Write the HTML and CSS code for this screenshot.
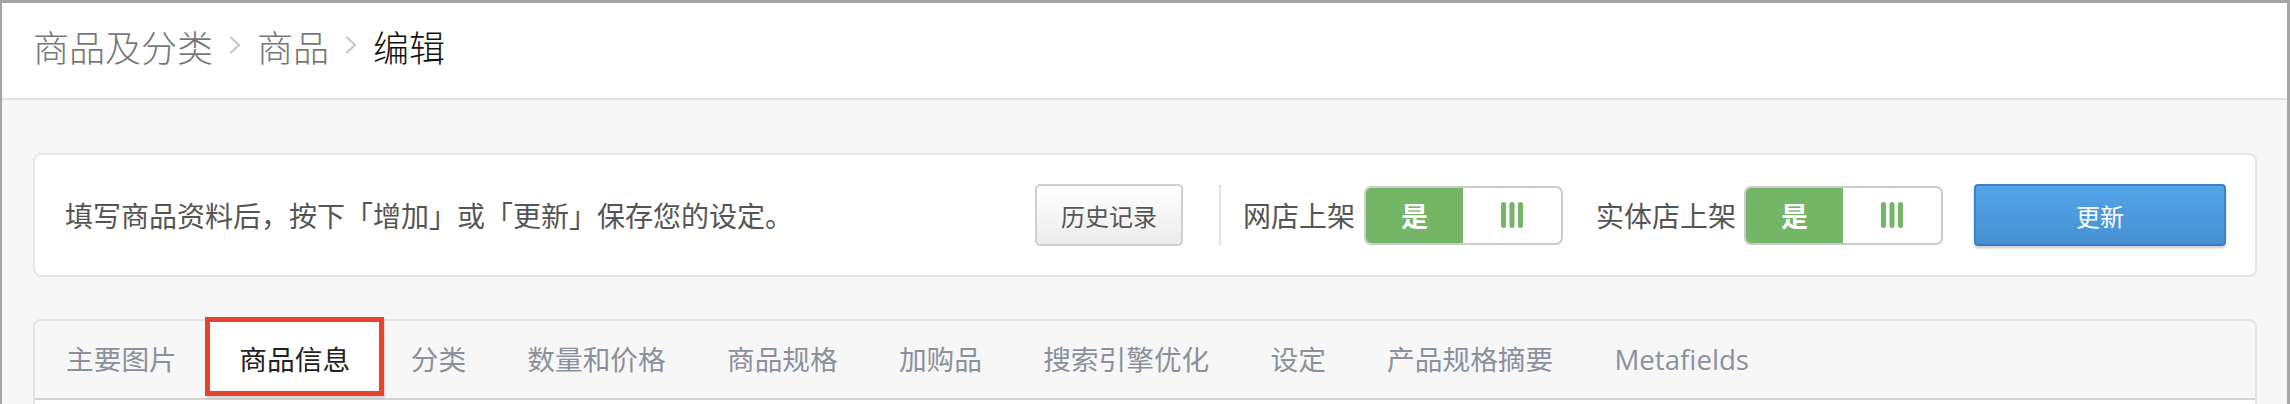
FILE: index.html
```html
<!DOCTYPE html>
<html lang="zh-CN">
<head>
<meta charset="utf-8">
<title>编辑商品</title>
<link rel="stylesheet" href="styles.css">
</head>
<body>
<div class="window">
  <header class="header">
    <nav class="crumbs">
      <span class="crumb">商品及分类</span>
      <svg class="chev" width="12" height="18" viewBox="0 0 12 18"><polyline points="2,1.5 10,9 2,16.5" fill="none" stroke="#c3c8d2" stroke-width="2.2" stroke-linecap="round" stroke-linejoin="round"/></svg>
      <span class="crumb">商品</span>
      <svg class="chev" width="12" height="18" viewBox="0 0 12 18"><polyline points="2,1.5 10,9 2,16.5" fill="none" stroke="#c3c8d2" stroke-width="2.2" stroke-linecap="round" stroke-linejoin="round"/></svg>
      <span class="crumb current">编辑</span>
    </nav>
  </header>

  <main class="main">
    <section class="card actions">
      <p class="hint">填写商品资料后，按下「增加」或「更新」保存您的设定。</p>
      <div class="controls">
        <button class="btn btn-default">历史记录</button>
        <span class="divider"></span>
        <span class="label label-web">网店上架</span>
        <div class="toggle">
          <span class="on">是</span>
          <span class="off"><svg width="22" height="26" viewBox="0 0 22 26"><rect x="0" y="0" width="5" height="26" rx="2.5" fill="#74b566"/><rect x="8.5" y="0" width="5" height="26" rx="2.5" fill="#74b566"/><rect x="17" y="0" width="5" height="26" rx="2.5" fill="#74b566"/></svg></span>
        </div>
        <span class="label label-store">实体店上架</span>
        <div class="toggle">
          <span class="on">是</span>
          <span class="off"><svg width="22" height="26" viewBox="0 0 22 26"><rect x="0" y="0" width="5" height="26" rx="2.5" fill="#74b566"/><rect x="8.5" y="0" width="5" height="26" rx="2.5" fill="#74b566"/><rect x="17" y="0" width="5" height="26" rx="2.5" fill="#74b566"/></svg></span>
        </div>
        <button class="btn btn-primary">更新</button>
      </div>
    </section>

    <section class="card tabs-card">
      <ul class="tabs">
        <li class="tab">主要图片</li>
        <li class="tab active">商品信息</li>
        <li class="tab">分类</li>
        <li class="tab">数量和价格</li>
        <li class="tab">商品规格</li>
        <li class="tab">加购品</li>
        <li class="tab">搜索引擎优化</li>
        <li class="tab">设定</li>
        <li class="tab">产品规格摘要</li>
        <li class="tab">Metafields</li>
      </ul>
      <div class="tab-body"></div>
    </section>
  </main>
</div>
</body>
</html>
```

FILE: styles.css
```css
* {
  box-sizing: border-box;
}

html, body {
  margin: 0;
  padding: 0;
}

body {
  background: #a5a5a5;
  font-family: "Open Sans", "Noto Sans CJK SC", sans-serif;
  overflow: hidden;
}

.window {
  margin: 3px 3px 0 2px;
  height: 401px;
  background: #f7f7f7;
  overflow: hidden;
}

/* ---------- header / breadcrumb ---------- */
.header {
  height: 97px;
  background: #ffffff;
  border-bottom: 2px solid #e3e3e3;
  display: flex;
  align-items: center;
  padding: 0 0 9px 31px;
}

.crumbs {
  display: flex;
  align-items: center;
  gap: 16px;
}

.crumb {
  font-family: "Noto Sans CJK SC", sans-serif;
  font-size: 36px;
  font-weight: 300;
  color: #777777;
  line-height: 1;
}

.crumb.current {
  color: #111111;
}

.chev {
  display: block;
  margin-top: -2px;
}

/* ---------- main ---------- */
.main {
  padding: 53px 30px 0 31px;
}

.card {
  background: #ffffff;
  border: 2px solid #e6e6e6;
  border-radius: 8px;
}

.actions {
  height: 124px;
  padding: 0 29px 0 30px;
  display: flex;
  align-items: center;
  justify-content: space-between;
}

.hint {
  margin: 0;
  font-size: 28px;
  color: #555555;
  white-space: nowrap;
}

.controls {
  display: flex;
  align-items: center;
}

.btn {
  font-family: "Open Sans", "Noto Sans CJK SC", sans-serif;
  font-size: 24px;
  height: 62px;
  border-radius: 5px;
  padding: 0;
  cursor: pointer;
}

.btn-default {
  width: 148px;
  color: #555555;
  border: 2px solid #cfcfcf;
  background: linear-gradient(#ffffff, #ececec);
  margin-right: 36px;
}

.divider {
  width: 2px;
  height: 60px;
  background: #e2e2e2;
  margin-right: 22px;
}

.label {
  font-size: 28px;
  color: #555555;
  white-space: nowrap;
}

.label-web {
  margin-right: 9px;
}

.label-store {
  margin-left: 33px;
  margin-right: 8px;
}

.toggle {
  width: 199px;
  height: 59px;
  border: 2px solid #cccccc;
  border-radius: 7px;
  overflow: hidden;
  display: flex;
  background: #ffffff;
}

.toggle .on {
  width: 97px;
  background: #74b566;
  color: #ffffff;
  font-size: 27px;
  font-weight: 700;
  display: flex;
  align-items: center;
  justify-content: center;
}

.toggle .off {
  flex: 1;
  display: flex;
  align-items: center;
  justify-content: center;
}

.toggle .off svg {
  display: block;
}

.btn-primary {
  width: 252px;
  margin-left: 31px;
  color: #ffffff;
  border: 2px solid #3b82c4;
  border-radius: 4px;
  background: linear-gradient(#53a4e9, #4590d1);
  box-shadow: 0 2px 3px rgba(0, 0, 0, 0.22);
}

/* ---------- tabs ---------- */
.tabs-card {
  margin-top: 42px;
  background: #f7f7f7;
  border-bottom: none;
  border-radius: 8px 8px 0 0;
  border-color: #e4e4e4;
}

.tabs {
  list-style: none;
  margin: 0;
  padding: 0;
  height: 79px;
  display: flex;
  align-items: flex-start;
  border-bottom: 2px solid #d3d3d3;
}

.tab {
  font-size: 27.7px;
  color: #8a919d;
  padding: 0 30.6px;
  height: 77px;
  line-height: 77px;
  white-space: nowrap;
}

.tab:first-child {
  padding-left: 31px;
}

.tab.active {
  position: relative;
  color: #222222;
  background: #ffffff;
  border: 5px solid #e8432d;
  margin: -4px -4px 0 -2px;
  padding: 5px 29px 0;
  height: 79px;
  line-height: 64px;
  box-shadow: 1px 2px 2px rgba(0, 0, 0, 0.15);
}

.tab-body {
  height: 40px;
  background: #ffffff;
}
```
